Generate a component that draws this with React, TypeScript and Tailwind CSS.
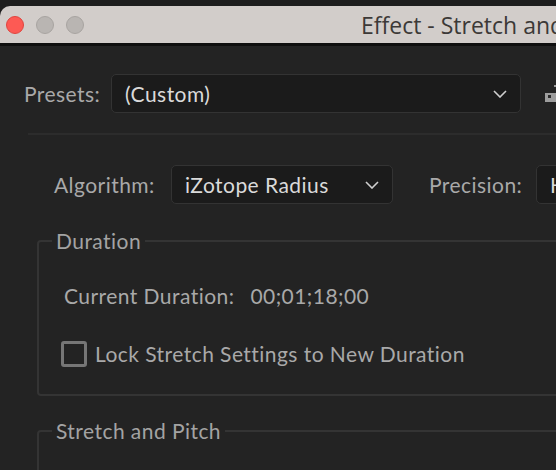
import React from 'react'

function Chevron() {
    return (
        <svg width="14" height="8" viewBox="0 0 14 8" className="shrink-0">
            <polyline points="1,1 7,7 13,1" fill="none" stroke="#cfcfcf" strokeWidth="1.6" />
        </svg>
    )
}

function Dropdown({ value, width, chevron = true }: { value: string; width: string; chevron?: boolean }) {
    return (
        <div
            className={`${width} h-[39px] shrink-0 flex items-center justify-between pl-[13px] pr-[13px] bg-[#1b1b1b] border border-[#333333] rounded-[5px]`}
        >
            <span className="text-[#dadada] whitespace-nowrap">{value}</span>
            {chevron && <Chevron />}
        </div>
    )
}

export default function App() {
    return (
        <div
            className="w-[556px] h-[470px] overflow-hidden bg-[#1d1d1d] text-[21px] leading-[26px] tracking-[0.45px]"
            style={{ fontFamily: 'Lato, "Open Sans", sans-serif' }}
        >
            {/* title bar */}
            <div className="mt-[6px] h-[37px] bg-[#d2cdca] rounded-tl-[10px] flex items-center">
                <div className="flex items-center gap-[12px] pl-[6px]">
                    <span className="w-[18px] h-[18px] rounded-full bg-[#fd5a54] border border-[#e0443e]" />
                    <span className="w-[18px] h-[18px] rounded-full bg-[#b9b5b2] border border-[#a8a4a1]" />
                    <span className="w-[18px] h-[18px] rounded-full bg-[#b9b5b2] border border-[#a8a4a1]" />
                </div>
                <span
                    className="ml-[277px] whitespace-nowrap text-[23px] tracking-normal text-[#3c3937]"
                    style={{ fontFamily: '"Open Sans", sans-serif' }}
                >
                    Effect - Stretch and Pitch
                </span>
            </div>
            <div className="h-[3px] bg-[#0f0f0f]" />

            {/* body */}
            <div className="bg-[#232323] h-full">
                <div className="pt-[28px] pl-[24px] flex items-center">
                    <span className="text-[#a9a9a9] w-[87px] shrink-0">Presets:</span>
                    <Dropdown value="(Custom)" width="w-[410px]" />
                    <svg width="14" height="18" viewBox="0 0 14 18" className="ml-[24px] shrink-0">
                        <rect x="9" y="0" width="2" height="2" fill="#9a9a9a" />
                        <rect x="0" y="8" width="14" height="9" fill="#9d9d9d" />
                        <rect x="3" y="10" width="3" height="3" fill="#2a2a2a" />
                    </svg>
                </div>

                <div className="mt-[20px] ml-[28px] h-[2px] bg-[#2c2c2c]" />

                <div className="mt-[30px] pl-[54px] flex items-center">
                    <span className="text-[#a9a9a9] w-[117px] shrink-0">Algorithm:</span>
                    <Dropdown value="iZotope Radius" width="w-[222px]" />
                    <span className="text-[#a9a9a9] ml-[36px] w-[107px] shrink-0">Precision:</span>
                    <Dropdown value="High Precision" width="w-[200px]" chevron={false} />
                </div>

                <fieldset className="mt-[24px] ml-[37px] w-[600px] border-2 border-[#343434] rounded-[4px] pl-[13px] pb-[27px]">
                    <legend className="px-[4px] text-[#a3a3a3]">Duration</legend>
                    <div className="pt-[29px] pl-[12px] flex items-center">
                        <span className="text-[#a9a9a9]">Current Duration:</span>
                        <span className="text-[#a9a9a9] ml-[16px]">00;01;18;00</span>
                    </div>
                    <label className="mt-[32px] pl-[9px] flex items-center">
                        <span className="w-[26px] h-[26px] shrink-0 border-[3px] border-[#767676] rounded-[3px]" />
                        <span className="ml-[8px] text-[#a9a9a9]">Lock Stretch Settings to New Duration</span>
                    </label>
                </fieldset>

                <fieldset className="mt-[22px] ml-[37px] w-[600px] h-[100px] border-2 border-[#343434] rounded-[4px] pl-[13px]">
                    <legend className="px-[4px] text-[#a3a3a3]">Stretch and Pitch</legend>
                </fieldset>
            </div>
        </div>
    )
}
